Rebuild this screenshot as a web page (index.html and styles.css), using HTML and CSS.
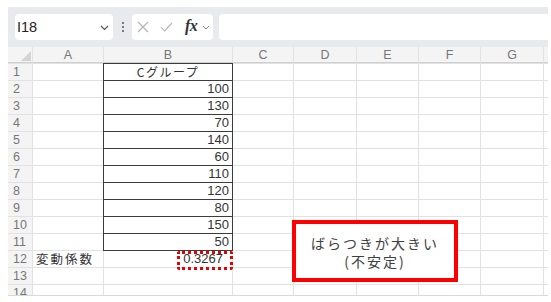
FILE: index.html
```html
<!DOCTYPE html>
<html lang="ja">
<head>
<meta charset="utf-8">
<link rel="stylesheet" href="styles.css">
</head>
<body>
<div class="app">
  <div class="toolbar">
    <div class="namebox">
      <span class="ref">I18</span>
      <svg class="chev" width="9" height="6" viewBox="0 0 9 6"><path d="M1 1 L4.5 4.5 L8 1" fill="none" stroke="#555" stroke-width="1.2"/></svg>
    </div>
    <div class="dots"><span></span><span></span><span></span></div>
    <div class="fxbox">
      <svg class="ico" width="12" height="12" viewBox="0 0 12 12"><path d="M1 1 L11 11 M11 1 L1 11" stroke="#b3b3b3" stroke-width="1.1" fill="none"/></svg>
      <svg class="ico" width="13" height="10" viewBox="0 0 13 10"><path d="M1 5 L4.5 9 L12 1" stroke="#b3b3b3" stroke-width="1.1" fill="none"/></svg>
      <span class="fx">fx</span>
      <svg class="chev2" width="8" height="5" viewBox="0 0 8 5"><path d="M1 1 L4 4 L7 1" fill="none" stroke="#888" stroke-width="1"/></svg>
    </div>
    <div class="formula"></div>
  </div>
  <div class="sheet">
    <div class="hd corner"><span class="tri"></span></div>
    <div class="hd">A</div><div class="hd">B</div><div class="hd">C</div><div class="hd">D</div><div class="hd">E</div><div class="hd">F</div><div class="hd">G</div><div class="hd"></div>

    <div class="rh">1</div><div class="c"></div><div class="c t ctr">Cグループ</div><div class="c"></div><div class="c"></div><div class="c"></div><div class="c"></div><div class="c"></div><div class="c"></div>
    <div class="rh">2</div><div class="c"></div><div class="c t num">100</div><div class="c"></div><div class="c"></div><div class="c"></div><div class="c"></div><div class="c"></div><div class="c"></div>
    <div class="rh">3</div><div class="c"></div><div class="c t num">130</div><div class="c"></div><div class="c"></div><div class="c"></div><div class="c"></div><div class="c"></div><div class="c"></div>
    <div class="rh">4</div><div class="c"></div><div class="c t num">70</div><div class="c"></div><div class="c"></div><div class="c"></div><div class="c"></div><div class="c"></div><div class="c"></div>
    <div class="rh">5</div><div class="c"></div><div class="c t num">140</div><div class="c"></div><div class="c"></div><div class="c"></div><div class="c"></div><div class="c"></div><div class="c"></div>
    <div class="rh">6</div><div class="c"></div><div class="c t num">60</div><div class="c"></div><div class="c"></div><div class="c"></div><div class="c"></div><div class="c"></div><div class="c"></div>
    <div class="rh">7</div><div class="c"></div><div class="c t num">110</div><div class="c"></div><div class="c"></div><div class="c"></div><div class="c"></div><div class="c"></div><div class="c"></div>
    <div class="rh">8</div><div class="c"></div><div class="c t num">120</div><div class="c"></div><div class="c"></div><div class="c"></div><div class="c"></div><div class="c"></div><div class="c"></div>
    <div class="rh">9</div><div class="c"></div><div class="c t num">80</div><div class="c"></div><div class="c"></div><div class="c"></div><div class="c"></div><div class="c"></div><div class="c"></div>
    <div class="rh">10</div><div class="c"></div><div class="c t num">150</div><div class="c"></div><div class="c"></div><div class="c"></div><div class="c"></div><div class="c"></div><div class="c"></div>
    <div class="rh">11</div><div class="c"></div><div class="c t num">50</div><div class="c"></div><div class="c"></div><div class="c"></div><div class="c"></div><div class="c"></div><div class="c"></div>
    <div class="rh">12</div><div class="c lbl">変動係数</div><div class="c num cv">0.3267<span class="dotbox"></span></div><div class="c"></div><div class="c"></div><div class="c"></div><div class="c"></div><div class="c"></div><div class="c"></div>
    <div class="rh">13</div><div class="c"></div><div class="c"></div><div class="c"></div><div class="c"></div><div class="c"></div><div class="c"></div><div class="c"></div><div class="c"></div>
    <div class="rh">14</div><div class="c"></div><div class="c"></div><div class="c"></div><div class="c"></div><div class="c"></div><div class="c"></div><div class="c"></div><div class="c"></div>

    <div class="note">ばらつきが大きい<br>(不安定)</div>
  </div>
</div>
</body>
</html>
```
FILE: styles.css
```css
html, body {
  margin: 0;
  padding: 0;
  background: #ffffff;
}
body {
  font-family: "Noto Sans CJK JP", "Liberation Sans", sans-serif;
}
.app {
  margin: 7px 0 0 8px;
  width: 540px;
}
.toolbar {
  height: 40px;
  box-sizing: border-box;
  background: #e8eaee;
  padding: 7px 0 0 7px;
  display: flex;
  align-items: flex-start;
}
.namebox {
  width: 98px;
  height: 26px;
  background: #fff;
  border-radius: 4px;
  display: flex;
  align-items: center;
  box-sizing: border-box;
  padding: 0 4px 0 2px;
}
.ref {
  font-family: "Liberation Sans", sans-serif;
  font-size: 14.5px;
  color: #222;
  flex: 1;
}
.chev { display: block; margin-top: 2px; }
.dots {
  width: 19px;
  height: 26px;
  display: flex;
  flex-direction: column;
  align-items: center;
  justify-content: center;
  gap: 2px;
}
.dots span {
  width: 2px;
  height: 2px;
  background: #555;
  border-radius: 1px;
}
.fxbox {
  width: 81px;
  height: 26px;
  background: #fff;
  border-radius: 4px;
  display: flex;
  align-items: center;
  box-sizing: border-box;
  padding-left: 5px;
}
.ico { display: block; margin-right: 11px; }
.fxbox .ico:nth-child(2) { margin-right: 12px; }
.fx {
  font-family: "Liberation Serif", serif;
  font-style: italic;
  font-weight: bold;
  font-size: 16px;
  color: #333;
  letter-spacing: -0.5px;
  margin-top: -2px;
}
.chev2 { display: block; margin-left: 5px; margin-top: 1px; }
.formula {
  flex: 1;
  height: 26px;
  background: #fff;
  margin-left: 6px;
  border-radius: 4px 0 0 4px;
}
.sheet {
  position: relative;
  display: grid;
  grid-template-columns: 24px 70px 128px 60px 62px 61px 61px 62px 4px;
  grid-auto-rows: 16px;
  gap: 1px;
  background: #e2e2e2;
  height: 248px;
  overflow: hidden;
  border-bottom: 1px solid #d8d8d8;
  font-size: 12px;
  color: #333;
}
.hd {
  background: #f4f4f4;
  color: #777;
  text-align: center;
  font-family: "Liberation Sans", sans-serif;
  font-size: 12.5px;
  line-height: 16px;
  box-shadow: inset 0 -1px 0 #cfcfcf;
}
.corner { position: relative; }
.tri {
  position: absolute;
  right: 1px;
  bottom: 2px;
  width: 0;
  height: 0;
  border-left: 10px solid transparent;
  border-bottom: 10px solid #d4d4d4;
}
.rh {
  background: #f4f4f4;
  color: #777;
  font-family: "Liberation Sans", sans-serif;
  font-size: 12.5px;
  line-height: 16px;
  padding-left: 5px;
}
.c {
  background: #fff;
  line-height: 16px;
  white-space: nowrap;
}
.t {
  position: relative;
  z-index: 1;
  box-shadow: 0 0 0 1px #3c3c3c;
}
.ctr {
  text-align: center;
  letter-spacing: 1.5px;
  font-size: 12px;
}
.num {
  text-align: right;
  padding-right: 3px;
  font-family: "Liberation Sans", sans-serif;
  font-size: 13px;
  color: #333;
}
.lbl {
  padding-left: 3px;
  letter-spacing: 2px;
  font-size: 12.5px;
}
.cv {
  position: relative;
  padding-right: 9px;
}
.dotbox {
  position: absolute;
  right: -1px;
  top: 0;
  width: 56px;
  height: 19px;
  box-sizing: border-box;
  border: 3px dotted #e60000;
  border-radius: 3px;
}
.note {
  position: absolute;
  left: 284px;
  top: 173px;
  width: 166px;
  height: 62px;
  box-sizing: border-box;
  border: 4px solid #ff0000;
  background: #fff;
  z-index: 2;
  text-align: center;
  font-size: 14px;
  letter-spacing: 2px;
  line-height: 18px;
  color: #404040;
  padding-top: 10px;
}
```
